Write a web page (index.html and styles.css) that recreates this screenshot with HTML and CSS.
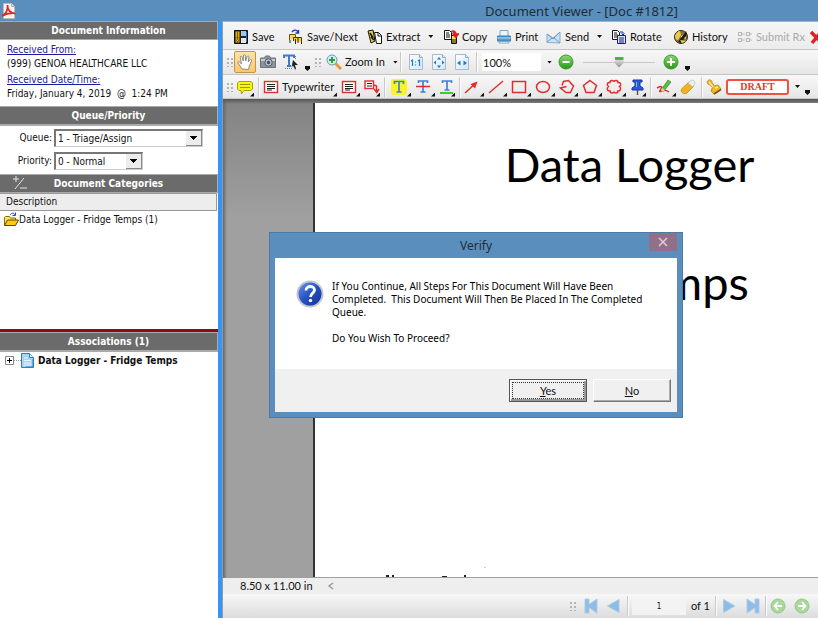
FILE: index.html
```html
<!DOCTYPE html>
<html lang="en">
<head>
<meta charset="utf-8">
<meta name="viewport" content="width=device-width, initial-scale=1">
<title>Document Viewer - [Doc #1812]</title>
<link rel="stylesheet" href="styles.css">
</head>
<body>
<svg class="defs" aria-hidden="true">
  <defs>
    <linearGradient id="gGreen" x1="0" y1="0" x2="0" y2="1"><stop offset="0" stop-color="#8ed676"/><stop offset="1" stop-color="#259a15"/></linearGradient>
    <linearGradient id="gBlue" x1="0" y1="0" x2="1" y2="1"><stop offset="0" stop-color="#6f9bea"/><stop offset=".5" stop-color="#2350c4"/><stop offset="1" stop-color="#12308f"/></linearGradient>
    <linearGradient id="gPage" x1="0" y1="0" x2="1" y2="1"><stop offset="0" stop-color="#fff"/><stop offset="1" stop-color="#d3e6f5"/></linearGradient>
    <symbol id="sheet" viewBox="0 0 16 16"><path d="M1.5 .5h10l3 3v12h-13z" fill="url(#gPage)" stroke="#a3bdd0"/><path d="M11.500 .5v3h3" fill="#d8e7f2" stroke="#8fafc7"/></symbol>
    <symbol id="copies" viewBox="0 0 16 16"><path d="M1.500 1.500h5l2 2v7h-7z" fill="#fff" stroke="#111"/><path d="M3 4h3M3 6h4M3 8h4" stroke="#111"/></symbol>
  </defs>
</svg>

<div class="window">
  <header class="titlebar">
    <svg class="pdf" viewBox="0 0 16 16" aria-hidden="true"><path d="M2.500 .5h8l3 3v12h-11z" fill="#f4f4f4" stroke="#bbb"/><path d="M10.500 .5v3h3" fill="#ddd" stroke="#aaa"/><path d="M1 13c4-2 6-6 5.500-11 0 5 3 8 8 8.500-5-1-9 0-13.500 2.500z" fill="none" stroke="#d92a20" stroke-width="1.600"/></svg>
    <h1>Document Viewer - [Doc #1812]</h1>
  </header>

  <div class="body">
    <aside class="side">
      <h2 class="head">Document Information</h2>
      <div class="info">
        <a href="#from">Received From:</a>
        <p>(999) GENOA HEALTHCARE LLC</p>
        <a href="#date" class="second">Received Date/Time:</a>
        <p>Friday, January 4, 2019 &nbsp;@ &nbsp;1:24 PM</p>
      </div>
      <h2 class="head">Queue/Priority</h2>
      <form class="queue">
        <div class="field"><label for="queue">Queue:</label><select id="queue" class="wide"><option>1 - Triage/Assign</option></select></div>
        <div class="field"><label for="priority">Priority:</label><select id="priority"><option>0 - Normal</option></select></div>
      </form>
      <h2 class="head"><svg class="plusminus" viewBox="0 0 16 16" aria-hidden="true"><path d="M1 4h6M4 1v6M3 14L12 3M8 13h7" stroke="#e4e4e4" fill="none"/></svg>Document Categories</h2>
      <div class="cats">
        <div class="colhead">Description</div>
        <div class="cat"><svg class="i16" viewBox="0 0 16 16" aria-hidden="true"><path d="M7 3c2-2.500 4-2.500 5 0M12.500 .5v3h-3" fill="none" stroke="#2646c8"/><path d="M1.500 13.500v-8l1-1h4l1 1.500h5v2" fill="#ffe46a" stroke="#8a6c00"/><path d="M1.500 13.500L4.500 8h11l-3 5.500z" fill="#ffc91a" stroke="#5c4a00"/></svg><span>Data Logger - Fridge Temps (1)</span></div>
      </div>
      <h2 class="head">Associations (1)</h2>
      <div class="assoc">
        <button class="expand" type="button" aria-label="Expand"><svg viewBox="0 0 9 9"><path d="M.5 .5h8v8h-8z" fill="#fff" stroke="#888"/><path d="M2 4.500h5M4.500 2v5" stroke="#000"/></svg></button>
        <span class="dots"></span>
        <svg class="doc" viewBox="0 0 13 15" aria-hidden="true"><path d="M.5 .5h8l4 4v10h-12z" fill="#a9d4f5" stroke="#2f7cba"/><path d="M8.500 .5v4h4" fill="#e8f5ff" stroke="#2f7cba"/><path d="M3 5h4M3 7.500h7M3 10h7M3 12h7" stroke="#e9f6ff"/><path d="M12 6v8H5" fill="none" stroke="#2b83c8"/></svg>
        <b>Data Logger - Fridge Temps</b>
      </div>
    </aside>

    <main class="viewer">
      <nav class="bar actions">
        <button type="button"><svg class="i16" viewBox="0 0 16 16"><path d="M1.500 1.500h13v13h-13z" fill="#222" stroke="#111"/><path d="M2.500 2.500h4v11h-4z" fill="#e6ad12"/><path d="M8 2h5v5H8z" fill="#9cc8ef"/><path d="M8 9h5v5H8z" fill="#dfe9f0"/><path d="M13.500 3v10" stroke="#2e6fb8"/><path d="M4.500 3v8M2 9l2.500 4L7 9z" fill="#ffd52e" stroke="#4b3a00" stroke-width=".7"/></svg>Save</button>
        <button type="button"><svg class="i16" viewBox="0 0 16 16"><path d="M4 3c2-3 5-2 6 0M10.500 1v3h-3" fill="none" stroke="#2438b8" stroke-width="1.400"/><path d="M1.500 11V5.500h6V9" fill="#f2d86a" stroke="#6d5000"/><path d="M5.500 12V8.500h8V13" fill="#ffd23c" stroke="#4a3600"/><path d="M2 11v3M7.500 10v5M10 9v5M13.500 13v2" stroke="#222"/></svg>Save/Next</button>
        <button type="button"><svg class="i16" viewBox="0 0 16 16"><path d="M1 2l5-1 2 11-4 2z" fill="#e2cf3c" stroke="#111"/><path d="M3 4l3 5M4 8l3 3" stroke="#111" stroke-width="1.500"/><path d="M7.500 3.500h4l3 3v8h-5z" fill="#fff" stroke="#111"/><path d="M11 4v3h3" fill="none" stroke="#111"/></svg>Extract<i class="caret"></i></button>
        <button type="button"><svg class="i16" viewBox="0 0 16 16"><use href="#copies"/><path d="M8.500 6.500h5v8h-5z" fill="#ffe14a" stroke="#111"/><path d="M8 2.500c3-1.500 5 0 5 3M10 5h5.500l-2.700 3.500z" fill="#e21c1c" stroke="#e21c1c" stroke-width="1.300"/><path d="M10 10v4M12 10v4" stroke="#111"/></svg>Copy</button>
        <button type="button"><svg class="i16" viewBox="0 0 16 16"><path d="M4 1.500h8v6H4z" fill="#eaf4fc" stroke="#7fa8c9"/><path d="M1.500 7h13v5h-13z" fill="#4d9ed4" stroke="#387daf"/><path d="M1 9h14" stroke="#b2e0fb"/><path d="M3 12.500h10v1.500H3z" fill="#f6fbff" stroke="#83aac6"/></svg>Print</button>
        <button type="button"><svg class="i16" viewBox="0 0 16 16"><path d="M1 5l6 4 7-6v11L1 13.500z" fill="#cce1f2" stroke="#86add0"/><path d="M1 5l6 5 7-7M1 13l5-4M14 14L8 9" fill="none" stroke="#6d9bc6"/></svg>Send<i class="caret"></i></button>
        <button type="button"><svg class="i16" viewBox="0 0 16 16"><use href="#copies"/><path d="M6.500 6.500h8v8h-8z" fill="#dfe5fc" stroke="#18206e"/><path d="M8 9h5M8 11h5M8 13h5" stroke="#18206e"/><path d="M9 3h3v3M10.500 4.500L12 6l1.500-1.500" fill="none" stroke="#2233c0"/></svg>Rotate</button>
        <button type="button"><svg class="i16" viewBox="0 0 16 16"><circle cx="8" cy="8" r="6.500" fill="#8d7530" stroke="#352b10"/><path d="M2 7c1-3 3-5 5-5l1 4-3 5c-2 0-3-2-3-4z" fill="#ecc94d"/><path d="M8 8l6-5M8 8l5 1" stroke="#fff"/><path d="M5 13L13 2l1 3-6 9z" fill="#1b1b1b"/><path d="M7 11l6 1-4 2z" fill="#f0d060"/></svg>History</button>
        <button type="button" disabled><svg class="i16" viewBox="0 0 16 16" fill="none" stroke="#b8b8b8"><rect x="1.500" y="3.500" width="3" height="3"/><rect x="9.500" y="3.500" width="3" height="3"/><rect x="1.500" y="9.500" width="3" height="3"/><rect x="9.500" y="9.500" width="3" height="3"/><path d="M5 5h3M5 11h3M13 5h2M13 11h2"/></svg>Submit Rx</button>
        <button type="button" aria-label="Delete"><svg class="i16" viewBox="0 0 16 16"><path d="M2 3l11 11M13 2L3 14" stroke="#d72525" stroke-width="3.500"/></svg></button>
      </nav>

      <nav class="bar zoom">
        <span class="grip"></span>
        <button type="button" class="hand" aria-label="Hand tool"><svg class="i18" viewBox="0 0 18 18"><path d="M6 16L2 10c-.6-1.400 1-2 2-.7L5.500 11 4.300 4.500c-.2-1.600 1.500-1.700 1.900-.3L7.300 8 7.400 2.800c.1-1.500 1.900-1.500 2 0L9.700 8l1.400-4.300c.6-1.300 2-.8 1.800.5L12.200 9l1.700-2.300c1-1 2.200 0 1.600 1.200L13 14l-.5 2.500z" fill="#fff" stroke="#8c8a85"/></svg></button>
        <button type="button" aria-label="Snapshot"><svg class="i16" viewBox="0 0 16 16"><path d="M.5 4h4l1-2h4l1 2h5v9.500H.5z" fill="#8f949b" stroke="#6d727a"/><path d="M1 5h14v2H1z" fill="#c5cad1"/><circle cx="8.500" cy="8.500" r="3.700" fill="#b6c1d2" stroke="#555b65"/><circle cx="8.500" cy="8.500" r="1.700" fill="#3f4c6e"/></svg></button>
        <button type="button" aria-label="Select text"><svg class="i16" viewBox="0 0 16 16"><path d="M1 4V1.500h10V4M6 2v10M4 12h4" fill="none" stroke="#3e79d2" stroke-width="2"/><path d="M10 6l5 5h-3l1 4-1 .5-2-4-1.500 2z" fill="#222"/><path d="M2 14.500h7M12.500 2v3" stroke="#777" stroke-dasharray="1 1"/></svg></button>
        <i class="caret low"></i>
        <span class="grip"></span>
        <button type="button"><svg class="i16" viewBox="0 0 16 16"><path d="M9 9l6 6" stroke="#e59a39" stroke-width="3"/><circle cx="6" cy="6" r="5" fill="#d7eefa" stroke="#5e9bc0"/><path d="M3 6h6M6 3v6" stroke="#2aa52b" stroke-width="2"/></svg>Zoom In<i class="caret"></i></button>
        <span class="sep"></span>
        <button type="button" aria-label="Actual size"><svg class="i16" viewBox="0 0 16 16"><use href="#sheet"/><path d="M3 7l1.500-1v6M10 7l1.500-1v6M7.500 7.500v1M7.500 10.500v1" stroke="#1f78c8" fill="none" stroke-width="1.200"/></svg></button>
        <button type="button" aria-label="Fit page"><svg class="i16" viewBox="0 0 16 16"><use href="#sheet"/><path d="M8 3l2 2.500H6zM8 14l2-2.500H6zM2.500 8.500l2.500-2v4zM13.500 8.500l-2.500-2v4z" fill="#1f78c8"/></svg></button>
        <button type="button" aria-label="Fit width"><svg class="i16" viewBox="0 0 16 16"><use href="#sheet"/><path d="M3 9l3.500-2.500v5zM13 9L9.500 6.500v5z" fill="#1f78c8"/></svg></button>
        <span class="sep"></span>
        <input class="percent" aria-label="Zoom level" value="100%">
        <i class="caret"></i>
        <button type="button" aria-label="Zoom out"><svg class="i16" viewBox="0 0 16 16"><circle cx="8" cy="8" r="7" fill="url(#gGreen)" stroke="#3a9a2c"/><path d="M4.500 8h7" stroke="#fff" stroke-width="2"/></svg></button>
        <input class="slider" type="range" aria-label="Zoom" value="50">
        <button type="button" aria-label="Zoom in"><svg class="i16" viewBox="0 0 16 16"><circle cx="8" cy="8" r="7" fill="url(#gGreen)" stroke="#3a9a2c"/><path d="M4 8h8M8 4v8" stroke="#fff" stroke-width="2"/></svg></button>
        <i class="caret low"></i>
      </nav>

      <nav class="bar markup">
        <span class="grip"></span>
        <button type="button" class="more" aria-label="Note"><svg class="i18" viewBox="0 0 18 18"><path d="M3 3.500h12l1.500 1.500v6L15 12.500H8L5.500 16l-.5-3.500H3L1.500 11V5z" fill="#f5f50e" stroke="#a8a400"/><path d="M4 6.500h10M4 9.500h10" stroke="#9c9a00"/></svg></button>
        <span class="sep"></span>
        <button type="button" class="more"><svg class="i16" viewBox="0 0 16 16"><rect x="1.500" y="2.500" width="13" height="11" fill="#fff" stroke="#e22d2d" stroke-width="1.400"/><path d="M4 5.500h8M4 7.500h8M4 9.500h8M4 11h5" stroke="#222"/></svg>Typewriter</button>
        <button type="button" class="more" aria-label="Text box"><svg class="i16" viewBox="0 0 16 16"><rect x="1.500" y="2.500" width="13" height="11" fill="#fff" stroke="#e22d2d" stroke-width="1.400"/><path d="M4 5.500h8M4 7.500h8M4 9.500h8M4 11h5" stroke="#222"/></svg></button>
        <button type="button" class="more" aria-label="Callout"><svg class="i16" viewBox="0 0 16 16"><rect x="1" y="2" width="8.500" height="7.500" fill="#fff" stroke="#e22d2d" stroke-width="1.400"/><path d="M3 4.500h5M3 7h5" stroke="#222"/><path d="M10 6l2.500 1v5M10 10l2.800 3.500L15 10" fill="none" stroke="#e22d2d" stroke-width="1.500"/></svg></button>
        <span class="sep"></span>
        <button type="button" class="more" aria-label="Highlight"><svg class="i18" viewBox="0 0 18 18"><rect x="1" y="1" width="16" height="16" rx="3" fill="#f8f32c"/><path d="M4.500 6V3.500h9V6M9 4v10M6.500 14h5" fill="none" stroke="#447fc5" stroke-width="1.700"/></svg></button>
        <button type="button" class="more" aria-label="Strike out"><svg class="i16" viewBox="0 0 16 16"><path d="M3.500 4V2h9v2M8 2v11M5.500 13h5" fill="none" stroke="#447fd0" stroke-width="1.700"/><path d="M1 7.500h14" stroke="#e22d2d" stroke-width="1.500"/></svg></button>
        <button type="button" class="more" aria-label="Underline"><svg class="i16" viewBox="0 0 16 16"><path d="M3.500 4V2h9v2M8 2v9M5.500 11h5" fill="none" stroke="#447fd0" stroke-width="1.700"/><path d="M1 14h13" stroke="#2fd32f" stroke-width="2"/></svg></button>
        <span class="sep"></span>
        <button type="button" class="more" aria-label="Arrow"><svg class="i16 line" viewBox="0 0 16 16"><path d="M1 14L12 4"/><path d="M13.500 2.500L6.500 5l4.500 4.500z" fill="#e22d2d" stroke="none"/></svg></button>
        <button type="button" class="more" aria-label="Line"><svg class="i16 line" viewBox="0 0 16 16"><path d="M1 14L15 2"/></svg></button>
        <button type="button" class="more" aria-label="Rectangle"><svg class="i16 line" viewBox="0 0 16 16"><rect x="1.500" y="2.500" width="13" height="11"/></svg></button>
        <button type="button" class="more" aria-label="Ellipse"><svg class="i16 line" viewBox="0 0 16 16"><ellipse cx="8" cy="8" rx="6.500" ry="5.500"/></svg></button>
        <button type="button" class="more" aria-label="Polyline"><svg class="i16 line" viewBox="0 0 16 16"><path d="M3 6.500L4.500 2.500 9.500 1.500 14.500 7 11.500 13.500H7L1.500 9l6-1.500"/></svg></button>
        <button type="button" class="more" aria-label="Polygon"><svg class="i16 line" viewBox="0 0 16 16"><path d="M8 1.500l6.500 5-2.500 7H4l-2.500-7z"/></svg></button>
        <button type="button" class="more" aria-label="Cloud"><svg class="i16 line" viewBox="0 0 16 16"><path d="M4 3.500c0-2.500 4-2.500 4-.5 0-2 4-2 4 .5 3-.5 3.500 3 1.500 4 2 1.500 1 5-1.500 4.500 0 2.500-4 2.500-4 .5 0 2-4 2-4-.5-3 .5-3.500-3-1.500-4.500-2-1.500-1.500-4.500 1.500-4z"/></svg></button>
        <button type="button" class="more" aria-label="Pin"><svg class="i16" viewBox="0 0 16 16"><path d="M3 1h9v2h-2v4l3 2v2H2V9l3-2V3H3z" fill="#2a59dc" stroke="#1b349d"/><path d="M7.500 11v5" stroke="#555" stroke-width="1.500"/><path d="M6.500 3v5" stroke="#8eb0ff"/></svg></button>
        <span class="sep"></span>
        <button type="button" class="more" aria-label="Pencil"><svg class="i16" viewBox="0 0 16 16"><path d="M1 9c4-2 6-2 4 1s-2 3 1 2 4-1 7 1" fill="none" stroke="#e22d2d" stroke-width="1.500"/><path d="M5 11l7-10 3 2-7 9z" fill="#55bd48" stroke="#368a2d" stroke-width=".7"/><path d="M5 11l1-2 3 2-3 2z" fill="#f2cf95"/></svg></button>
        <button type="button" aria-label="Eraser"><svg class="i16" viewBox="0 0 16 16"><path d="M1.500 10L9 3l5 4-7 7c-3 2-7-1-5.500-4z" fill="#f0b51e" stroke="#b88310" stroke-width=".7"/><path d="M8 4l3-2.500c2-1.500 5 1.500 3.500 3.500L13 8z" fill="#eee" stroke="#bbb" stroke-width=".7"/></svg></button>
        <span class="sep"></span>
        <button type="button" aria-label="Stamp"><svg class="i16" viewBox="0 0 16 16"><path d="M1.500 2c1.500-2 5-1 4.500 1.500L8.500 7l3.500-1 3 4-7 5-3-3 1.500-3.500L3 5.500C1.500 5 .8 3.500 1.500 2z" fill="#efb92b" stroke="#b57d12" stroke-width=".8"/><path d="M8 15l7-4.500" stroke="#7e5410" stroke-width="1.500"/><path d="M3 3l4 5M9 9l3-1" stroke="#ffea92" stroke-width="1.500"/></svg></button>
        <button type="button" class="draft">DRAFT</button>
        <i class="caret"></i>
        <i class="caret low"></i>
      </nav>

      <section class="canvas">
        <article class="page">
          <p>Data Logger</p>
          <p class="subject">Fridge Temps</p>
          <svg class="cut" viewBox="0 0 90 10" aria-hidden="true"><path d="M1 8h3v2H1zM7 8h2v2H7zM57 9h5v1h-5zM79 8h2v2h-2z" fill="#222"/><path d="M99 0h2v1h-2z" fill="#ccc"/></svg>
        </article>
      </section>

      <div class="status"><span class="size">8.50 x 11.00 in</span><svg class="left" viewBox="0 0 8 8" aria-hidden="true"><path d="M6 1L2 4l4 3" fill="none" stroke="#999" stroke-width="1.400"/></svg></div>

      <nav class="pager">
        <span class="grip"></span>
        <button type="button" aria-label="First page"><svg class="i16" viewBox="0 0 16 16"><path d="M2 1h4v5.500L14 1v14L6 9.500V15H2z" fill="#8dbce6" stroke="#abcbe8"/></svg></button>
        <button type="button" aria-label="Previous page"><svg class="i16" viewBox="0 0 16 16"><path d="M1.500 8L13 1.500v13z" fill="#8dbce6" stroke="#abcbe8"/></svg></button>
        <span class="sep"></span>
        <input class="pageno" aria-label="Page" value="1">
        <span class="of">of 1</span>
        <span class="sep"></span>
        <button type="button" aria-label="Next page"><svg class="i16" viewBox="0 0 16 16"><path d="M14 8L2.500 1.500v13z" fill="#8dbce6" stroke="#abcbe8"/></svg></button>
        <button type="button" aria-label="Last page"><svg class="i16" viewBox="0 0 16 16"><path d="M14 1h-4v5.500L2 1v14l8-5.500V15h4z" fill="#8dbce6" stroke="#abcbe8"/></svg></button>
        <span class="sep"></span>
        <button type="button" aria-label="Back"><svg class="i16" viewBox="0 0 16 16"><circle cx="8" cy="8" r="7" fill="#aad79b" stroke="#93c884"/><path d="M12 8H4.500M8 4L4.500 8 8 12" fill="none" stroke="#fff" stroke-width="1.800"/></svg></button>
        <button type="button" aria-label="Forward"><svg class="i16" viewBox="0 0 16 16"><circle cx="8" cy="8" r="7" fill="#aad79b" stroke="#93c884"/><path d="M4 8h7.500M8 4l3.500 4L8 12" fill="none" stroke="#fff" stroke-width="1.800"/></svg></button>
      </nav>
    </main>
  </div>

  <div class="dialog" role="dialog" aria-labelledby="verify">
    <div class="dialog-title"><h2 id="verify">Verify</h2><button type="button" class="close" aria-label="Close"><svg viewBox="0 0 10 10"><path d="M1 1l8 8M9 1L1 9" stroke="#e3cdd6" stroke-width="1.500"/></svg></button></div>
    <div class="dialog-body">
      <svg class="question" viewBox="0 0 28 28" aria-hidden="true"><circle cx="14" cy="14" r="12.500" fill="url(#gBlue)" stroke="#c3c5cc" stroke-width="2"/><path d="M10 10.500c0-5.500 8.500-5 8.500-.5 0 3-4 3.300-4 7" fill="none" stroke="#fff" stroke-width="2.800"/><circle cx="14.500" cy="20.500" r="1.700" fill="#fff"/></svg>
      <div class="message">
        <p>If You Continue, All Steps For This Document Will Have Been<br>Completed. &nbsp;This Document Will Then Be Placed In The Completed<br>Queue.</p>
        <p>Do You Wish To Proceed?</p>
      </div>
    </div>
    <div class="dialog-foot">
      <button type="button" class="push default"><span><u>Y</u>es</span></button>
      <button type="button" class="push"><span><u>N</u>o</span></button>
    </div>
  </div>
</div>
</body>
</html>
```
FILE: styles.css
```css
* { box-sizing: border-box; }
html, body { height: 100%; margin: 0; }
body { overflow: hidden; color: #111; font: 10px/14px "DejaVu Sans Condensed", "Noto Sans", sans-serif; }
h1, h2, p { margin: 0; font-weight: normal; }
button, input, select { font: inherit; color: inherit; }
button { padding: 0; border: 0; background: none; }
svg { display: block; flex: none; }
.defs { position: absolute; width: 0; height: 0; }

.window { position: relative; display: flex; flex-direction: column; height: 100%; background: #5a8fbd; }
.titlebar { display: flex; align-items: center; height: 21px; flex: none; }
.titlebar h1 { flex: 1; padding-left: 328px; text-align: center; font: 13px/20px "Noto Sans", sans-serif; color: #202b36; }
.pdf { width: 16px; height: 16px; margin-left: 1px; }
.body { display: flex; flex: 1; min-height: 0; }

/* Left panel */
.side { display: flex; flex-direction: column; flex: 0 0 222px; min-height: 0; background: #fff; border-right: 4px solid #3394fa; }
.head { position: relative; flex: none; height: 19px; border: 1px solid #aaa; border-width: 1px 1px 1px 0; background: #6b6b6b; color: #fff; font: bold 10px/17px "DejaVu Sans Condensed", sans-serif; text-align: center; }
.plusminus { position: absolute; left: 12px; top: 0; width: 16px; height: 16px; }
.info { display: flex; flex-direction: column; height: 66px; padding: 3px 7px; flex: none; }
.info a { color: #1a1a9c; align-self: flex-start; }
.info .second { margin-top: 2px; }
.queue { display: flex; flex-direction: column; gap: 5px; height: 49px; padding: 3px 0; border-top: 1px solid #aaa; flex: none; }
.field { display: flex; align-items: center; gap: 2px; height: 18px; }
.field label { width: 52px; text-align: right; }
.field select { appearance: none; width: 89px; height: 18px; padding: 0 2px; border: 1px solid #777; border-width: 2px 1px 1px 2px; border-color: #777 #ccc #ccc #777; border-radius: 0; background: linear-gradient(#000, #000) right 5px top 5px / 7px 1px no-repeat, linear-gradient(#000, #000) right 6px top 6px / 5px 1px no-repeat, linear-gradient(#000, #000) right 7px top 7px / 3px 1px no-repeat, linear-gradient(#000, #000) right 8px top 8px / 1px 1px no-repeat, linear-gradient(#888, #888) right / 1px 100% no-repeat, linear-gradient(#888, #888) bottom right / 16px 1px no-repeat, linear-gradient(#ececec, #ececec) right / 16px 100% no-repeat #fff; }
.field .wide { width: 149px; }
.cats { flex: 0 0 139px; border-bottom: 3px solid #8d0b10; }
.colhead { height: 18px; margin-right: 1px; padding: 0 6px; border: 1px solid #999; border-left: 0; background: #ededed; line-height: 16px; }
.cat { display: flex; align-items: center; padding: 0 3px; height: 18px; }
.assoc { display: flex; align-items: center; height: 18px; padding-left: 5px; border-top: 1px solid #aaa; }
.expand svg { width: 9px; height: 9px; }
.dots { width: 7px; height: 1px; border-top: 1px dotted #999; }
.doc { width: 13px; height: 15px; margin-right: 4px; }

/* Toolbars */
.viewer { display: flex; flex-direction: column; flex: 1; min-width: 0; background: #f0f0f0; border-left: 1px solid #999; border-top: 1px solid #9db5cb; }
.bar { display: grid; align-items: center; flex: none; height: 25px; border-bottom: 1px solid #c4c4c4; background: linear-gradient(#f8f8f8, #e6e6e6); font: 11px/16px Lato, "Noto Sans", sans-serif; overflow: hidden; }
.bar button { display: flex; align-items: center; gap: 3px; height: 20px; white-space: nowrap; }
.i16 { width: 16px; height: 16px; }
.i18 { width: 18px; height: 18px; }
.actions { height: 28px; padding: 2px 0 0 10px; grid-template-columns: 55px 79px 76px 53px 50px 65px 62px 64px 72px 16px; background: linear-gradient(#f5f5f5, #ececec); }
.actions button:disabled { color: #aaa; }
.zoom { padding-left: 3px; grid-template-columns: 8px 26px 23px 22px 9px 12px 74px 8px 23px 23px 22px 6px 65px 11px 25px 80px 22px 8px; }
.markup { height: 24px; padding-left: 3px; grid-template-columns: 10px 22px 5px 78px 23px 20px 6px 25px 24px 20px 5px 24px 23px 24px 24px 23px 24px 24px 20px 6px 24px 21px 5px 20px 69px 10px 8px; }
.hand { justify-content: center; width: 22px; height: 22px; border: 1px solid #c2944a; border-radius: 2px; background: linear-gradient(#fbe3ae, #ffc766); }
.bar .hand { height: 22px; }
.grip { width: 7px; height: 10px; background: radial-gradient(circle, #b4b4b4 1px, transparent 1px) 0 0 / 4px 4px; }
.sep { width: 1px; height: 20px; background: #c8c8c8; box-shadow: 1px 0 #fff; }
.caret { width: 5px; height: 3px; flex: none; background: #111; clip-path: polygon(0 0, 100% 0, 50% 100%); }
.bar button .caret { margin-left: 5px; }
.low { width: 5px; height: 5px; align-self: end; margin-bottom: 3px; clip-path: polygon(0 0, 100% 0, 100% 50%, 50% 100%, 0 50%); }
.percent { width: 59px; height: 18px; padding: 0 1px; border: 0; background: #fff; }
.slider { appearance: none; width: 72px; height: 14px; margin: 0; background: linear-gradient(#c9c9c9, #c9c9c9) center / 100% 1px no-repeat; }
.slider::-webkit-slider-thumb { appearance: none; width: 9px; height: 11px; background: linear-gradient(#48b53c 3px, #ddd 3px, #8b8b8b); clip-path: polygon(0 0, 100% 0, 100% 60%, 50% 100%, 0 60%); }
.line { fill: none; stroke: #e22d2d; stroke-width: 1.500; }
.more { position: relative; }
.more::after { content: ""; position: absolute; right: 4px; bottom: 0; width: 4px; height: 4px; background: #111; clip-path: polygon(100% 0, 100% 100%, 0 100%); }
.bar .draft { justify-content: center; width: 63px; height: 16px; border: 2px solid #ee5341; border-radius: 3px; background: #fff; color: #dd3c2c; font: bold 10px/12px "Liberation Serif", serif; }

/* Document area */
.canvas { display: flex; flex: 1; min-height: 0; padding: 4px 0 1px 90px; background: linear-gradient(#555, transparent 5px), linear-gradient(90deg, #666, transparent 4px), linear-gradient(#828282, #a0a0a0 120px); }
.page { position: relative; flex: 1; border-left: 2px solid #333; background: #fff; text-align: center; overflow: hidden; padding: 28px 0 0 126px; font: 47px/66px Lato, "Noto Sans", sans-serif; color: #000; white-space: nowrap; }
.page .subject { margin-top: 52px; padding-right: 32px; }
.cut { position: absolute; left: 70px; bottom: 0; width: 90px; height: 10px; overflow: visible; }
.status { display: flex; align-items: center; flex: none; height: 16px; background: #eee; font: 11px/16px Lato, "Noto Sans", sans-serif; }
.size { width: 100px; padding-left: 17px; }
.left { width: 8px; height: 8px; margin-left: 4px; }
.pager { display: grid; grid-template-columns: 14px 23px 21px 5px 59px 24px 6px 24px 20px 5px 24px 18px; justify-content: end; align-items: center; flex: none; height: 24px; padding-right: 6px; background: linear-gradient(#f8f8f8, #dcdcdc); }
.pageno { width: 54px; height: 17px; border: 0; background: #f3f3f3; text-align: center; font-size: 8px; }
.of { font: 11px/16px Lato, "Noto Sans", sans-serif; }

/* Confirmation dialog */
.dialog { position: absolute; left: 269px; top: 232px; width: 414px; padding: 0 5px 5px; border: 1px solid #4a7ba8; background: #5a8fbd; }
.dialog-title { position: relative; height: 25px; }
.dialog-title h2 { text-align: center; font: 12px/25px "Noto Sans", sans-serif; color: #222d38; }
.close { position: absolute; right: 0; top: 0; display: grid; place-items: center; width: 28px; height: 18px; background: #91708a; }
.close svg { width: 10px; height: 10px; }
.dialog-body { display: flex; gap: 8px; height: 111px; padding: 22px 21px; background: #fff; }
.question { width: 28px; height: 28px; }
.message { font: 500 10px/13px "Noto Sans", sans-serif; color: #000; white-space: nowrap; }
.message p + p { margin-top: 13px; }
.dialog-foot { display: flex; justify-content: flex-end; align-items: flex-start; gap: 6px; height: 43px; padding: 10px 6px; background: #f0f0f0; }
.push { width: 78px; height: 23px; border: 1px solid; border-color: #fff #777 #777 #fff; box-shadow: inset -1px -1px #aaa; background: #f0f0f0; font: 11px/15px Lato, "Noto Sans", sans-serif; }
.default { padding: 2px; border-color: #555; box-shadow: inset 1px 1px #fff, inset -2px -2px #999; }
.default span { display: block; border: 1px dotted #333; }
```
